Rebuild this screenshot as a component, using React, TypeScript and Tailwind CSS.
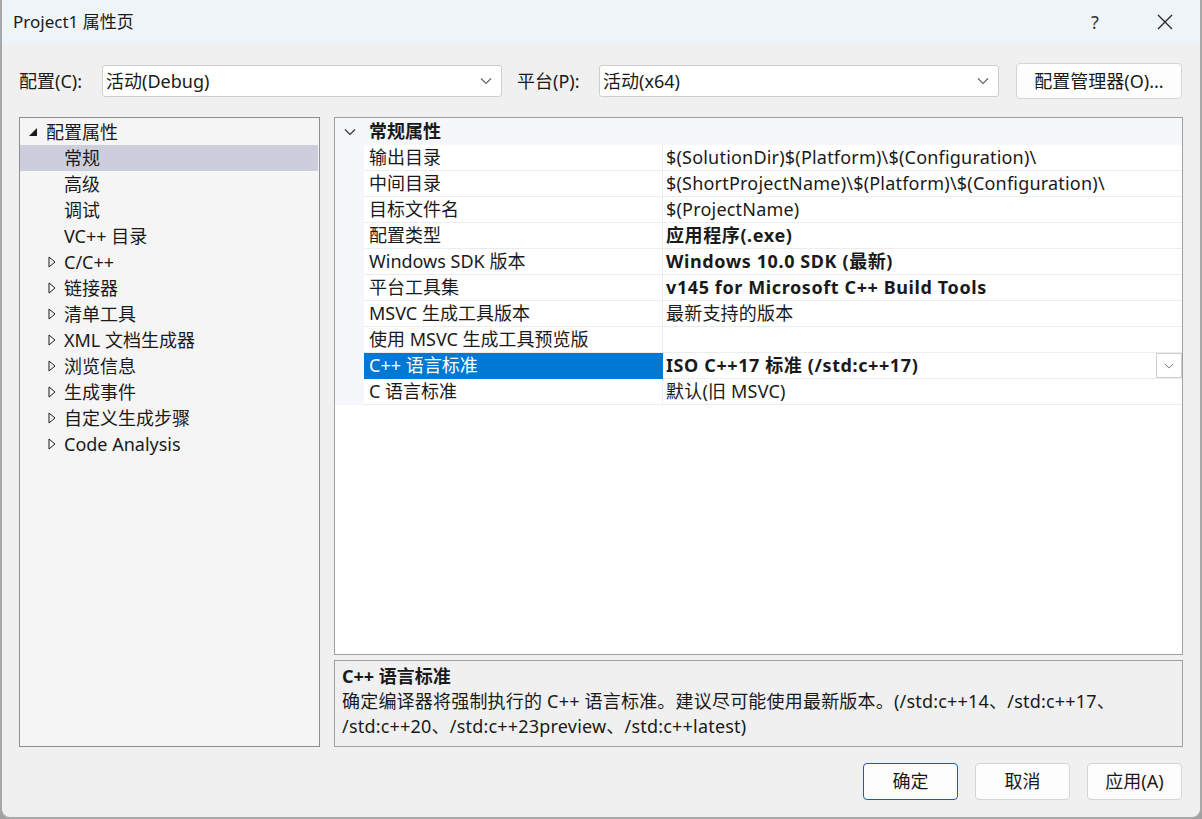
import React from 'react'

const font = "font-['Noto_Sans','Noto_Sans_CJK_SC',sans-serif]"

interface Prop {
  name: string
  value: string
  bold?: boolean
  selected?: boolean
}

const props: Prop[] = [
  { name: '输出目录', value: '$(SolutionDir)$(Platform)\\$(Configuration)\\' },
  { name: '中间目录', value: '$(ShortProjectName)\\$(Platform)\\$(Configuration)\\' },
  { name: '目标文件名', value: '$(ProjectName)' },
  { name: '配置类型', value: '应用程序(.exe)', bold: true },
  { name: 'Windows SDK 版本', value: 'Windows 10.0 SDK (最新)', bold: true },
  { name: '平台工具集', value: 'v145 for Microsoft C++ Build Tools', bold: true },
  { name: 'MSVC 生成工具版本', value: '最新支持的版本' },
  { name: '使用 MSVC 生成工具预览版', value: '' },
  { name: 'C++ 语言标准', value: 'ISO C++17 标准 (/std:c++17)', bold: true, selected: true },
  { name: 'C 语言标准', value: '默认(旧 MSVC)' },
]

const treeChildren = ['常规', '高级', '调试', 'VC++ 目录']
const treeCollapsed = ['C/C++', '链接器', '清单工具', 'XML 文档生成器', '浏览信息', '生成事件', '自定义生成步骤', 'Code Analysis']

function Chevron({ className = '' }: { className?: string }) {
  return (
    <svg className={className} width="12" height="8" viewBox="0 0 12 8" fill="none">
      <path d="M1 1.5l5 5 5-5" stroke="currentColor" strokeWidth="1.2" />
    </svg>
  )
}

function ComboBox({ text }: { text: string }) {
  return (
    <div className="flex items-center justify-between w-[400px] h-[32px] bg-white border border-[#cfcfcf] rounded-[3px] pl-[3px] pr-[9px]">
      <span>{text}</span>
      <Chevron className="text-[#666]" />
    </div>
  )
}

function Button({ label, primary }: { label: string; primary?: boolean }) {
  return (
    <div
      className={
        primary
          ? 'flex items-center justify-center w-[95px] h-[37px] bg-[#fdfdfd] border border-[#0067c0] rounded-[4px]'
          : 'flex items-center justify-center w-[95px] h-[37px] bg-[#fdfdfd] border border-[#d4d4d4] rounded-[4px]'
      }
    >
      {label}
    </div>
  )
}

export default function App() {
  return (
    <div className={`${font} text-[18px] text-[#1a1a1a] w-[1202px] h-[819px] bg-[#a0a0a0]`}>
      <div className="flex flex-col w-full h-full bg-[#f0f0f0] border-x-2 border-b-2 border-[#a8a8a8] rounded-b-[10px] overflow-hidden">
        {/* Title bar */}
        <div className="flex items-center justify-between h-[44px] bg-[#eff4f9] pl-[11px] shrink-0">
          <span className="text-[17px]">Project1 属性页</span>
          <div className="flex items-center h-full">
            <span className="w-[70px] text-center text-[18px] text-[#333]">?</span>
            <div className="w-[70px] flex justify-center">
              <svg width="16" height="16" viewBox="0 0 16 16" fill="none">
                <path d="M1 1l14 14M15 1L1 15" stroke="#222" strokeWidth="1.3" />
              </svg>
            </div>
          </div>
        </div>

        {/* Config row */}
        <div className="flex items-center h-[36px] mt-[19px] pl-[17px] shrink-0">
          <span className="w-[83px]">配置(C):</span>
          <ComboBox text="活动(Debug)" />
          <span className="ml-[15px] w-[82px]">平台(P):</span>
          <ComboBox text="活动(x64)" />
          <div className="ml-[17px] flex items-center justify-center w-[166px] h-[36px] bg-[#fdfdfd] border border-[#d4d4d4] rounded-[4px]">
            配置管理器(O)...
          </div>
        </div>

        {/* Main area */}
        <div className="flex mt-[18px] pl-[17px] h-[630px] shrink-0">
          {/* Tree */}
          <div className="w-[301px] h-full bg-[#f5f5f5] border border-[#8a8e94] py-[1px] pr-[1px]">
            <div className="flex items-center h-[26px] pl-[8px]">
              <svg width="10" height="10" viewBox="0 0 10 10" className="mr-[8px]">
                <path d="M9 1v8H1z" fill="#1a1a1a" />
              </svg>
              <span>配置属性</span>
            </div>
            {treeChildren.map((t, i) => (
              <div key={t} className={i === 0 ? 'flex items-center h-[26px] pl-[44px] bg-[#cccfdb]' : 'flex items-center h-[26px] pl-[44px]'}>
                {t}
              </div>
            ))}
            {treeCollapsed.map((t) => (
              <div key={t} className="flex items-center h-[26px] pl-[28px]">
                <svg width="8" height="12" viewBox="0 0 8 12" className="mr-[8px]">
                  <path d="M1 1l6 5-6 5z" fill="none" stroke="#1a1a1a" strokeWidth="1" />
                </svg>
                <span>{t}</span>
              </div>
            ))}
          </div>

          {/* Right column */}
          <div className="flex flex-col ml-[14px] w-[849px] h-full">
            <div className="h-[538px] bg-white border border-[#a0a0a0] shrink-0">
              <div className="flex items-center h-[27px] bg-[#f5f7fa]">
                <div className="w-[29px] flex justify-center">
                  <Chevron className="text-[#333]" />
                </div>
                <span className="font-bold ml-[5px]">常规属性</span>
              </div>
              {props.map((p) => (
                <div key={p.name} className="flex h-[26px]">
                  <div className="w-[29px] bg-[#f5f7fa] shrink-0" />
                  <div
                    className={
                      p.selected
                        ? 'w-[299px] shrink-0 flex items-center pl-[5px] bg-[#0078d4] text-white border-b border-[#0078d4]'
                        : 'w-[299px] shrink-0 flex items-center pl-[5px] border-b border-r border-[#ececec]'
                    }
                  >
                    {p.name}
                  </div>
                  <div className="flex-1 flex items-center justify-between pl-[3px] border-b border-[#ececec]">
                    <span className={p.bold ? 'font-bold tracking-[0.6px]' : 'tracking-[0.2px]'}>{p.value}</span>
                    {p.selected && (
                      <div className="flex items-center justify-center w-[26px] h-[25px] bg-white border border-[#cfcfcf]">
                        <Chevron className="text-[#777] w-[10px]" />
                      </div>
                    )}
                  </div>
                </div>
              ))}
            </div>
            <div className="mt-[5px] flex-1 bg-[#f0f0f0] border border-[#a0a0a0] pl-[7px] pt-[3px] leading-[25px]">
              <div className="font-bold">C++ 语言标准</div>
              <div className="tracking-[0.2px]">确定编译器将强制执行的 C++ 语言标准。建议尽可能使用最新版本。(/std:c++14、/std:c++17、</div>
              <div className="tracking-[0.2px]">/std:c++20、/std:c++23preview、/std:c++latest)</div>
            </div>
          </div>
        </div>

        {/* Buttons */}
        <div className="flex justify-end gap-[17px] mt-[16px] pr-[18px]">
          <Button label="确定" primary />
          <Button label="取消" />
          <Button label="应用(A)" />
        </div>
      </div>
    </div>
  )
}
